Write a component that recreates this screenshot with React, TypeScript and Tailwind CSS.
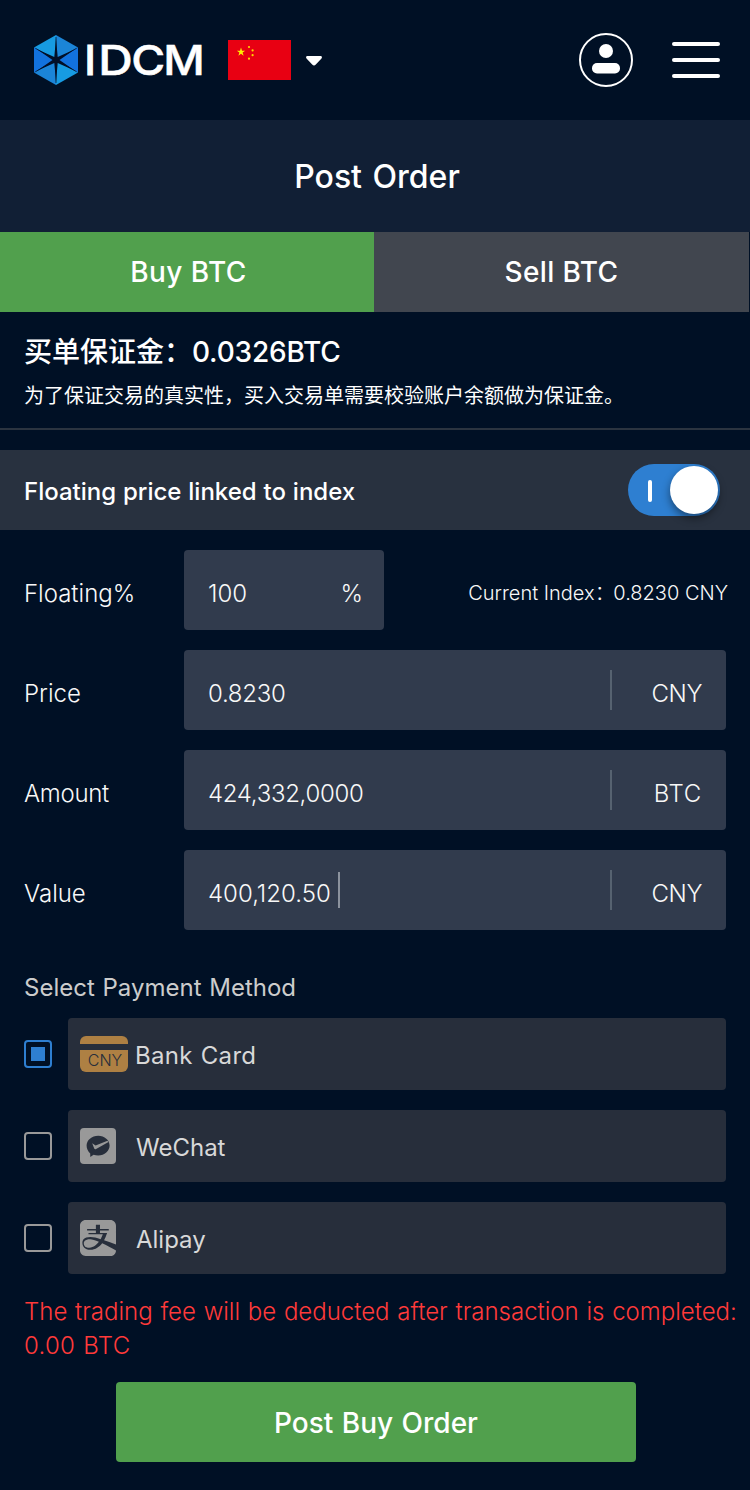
import { useState, type ReactNode } from 'react';
import { FaAlipay } from 'react-icons/fa';

function Logo() {
  return (
    <svg width="170" height="50" viewBox="34 35 170 50" className="shrink-0">
      <polygon points="56,60 34,47.5 56,35" fill="#179be2" />
      <polygon points="56,60 56,35 78,47.5" fill="#1b85d8" />
      <polygon points="56,60 78,47.5 78,72.5" fill="#1272de" />
      <polygon points="56,60 78,72.5 56,85" fill="#179be2" />
      <polygon points="56,60 56,85 34,72.5" fill="#1b85d8" />
      <polygon points="56,60 34,72.5 34,47.5" fill="#1272de" />
      <path d="M56 37v46M35.500 48.300l41 23.400M76.500 48.300l-41 23.400" stroke="#020f27" strokeWidth="0.7" />
      <polygon
        fill="#020f27"
        points="56,38 57.700,57 75,49.200 59.500,60 75,70.800 57.700,63 56,82 54.300,63 37,70.800 52.500,60 37,49.200 54.300,57"
      />
      <g fill="#fff" stroke="#fff" strokeWidth="0.5" fontSize="41" fontWeight="500" fontFamily="Inter, sans-serif">
        <text x="84.600" y="75" strokeWidth="1">I</text>
        <text x="98.300" y="75" textLength="34.500" lengthAdjust="spacingAndGlyphs">D</text>
        <text x="131.200" y="75" textLength="34" lengthAdjust="spacingAndGlyphs">C</text>
        <text x="163.200" y="75" textLength="41.500" lengthAdjust="spacingAndGlyphs">M</text>
      </g>
    </svg>
  );
}

function Flag() {
  return (
    <svg width="63" height="40" viewBox="0 0 63 40" className="ml-6 shrink-0">
      <rect width="63" height="40" fill="#e80012" />
      <polygon fill="#fff000" points="13,7.6 14,10.7 17.2,10.7 14.6,12.6 15.6,15.7 13,13.8 10.4,15.7 11.4,12.6 8.8,10.7 12,10.7" />
      <g fill="#ffd800">
        <circle cx="21" cy="7" r="1.1" />
        <circle cx="24.6" cy="10.4" r="1.1" />
        <circle cx="24.6" cy="15.2" r="1.1" />
        <circle cx="21" cy="18.7" r="1.1" />
      </g>
    </svg>
  );
}

function Header() {
  return (
    <header className="flex h-[120px] items-center pr-[30px] pl-[34px]">
      <Logo />
      <Flag />
      <svg width="16" height="10" viewBox="0 0 16 10" className="mt-0.5 ml-[15px]">
        <path d="M1.5 0h13c1.4 0 1.9 1.4 1 2.4L9.8 8.6c-1.1 1.2-2.5 1.2-3.6 0L.5 2.4C-.4 1.4.1 0 1.5 0z" fill="#fff" />
      </svg>
      <svg width="54" height="54" viewBox="0 0 54 54" className="ml-auto">
        <circle cx="27" cy="27" r="26" fill="none" stroke="#fff" strokeWidth="2" />
        <circle cx="27" cy="18" r="7" fill="#fff" />
        <rect x="13" y="30" width="28" height="10.5" rx="5" fill="#fff" />
      </svg>
      <div className="ml-[39px] flex flex-col gap-3">
        <span className="h-1 w-12 rounded-full bg-white" />
        <span className="h-1 w-12 rounded-full bg-white" />
        <span className="h-1 w-12 rounded-full bg-white" />
      </div>
    </header>
  );
}

function Row({ label, children }: { label: string; children: ReactNode }) {
  return (
    <div className="flex h-20 items-center">
      <span className={`w-40 pt-2 ${label === 'Amount' ? '-tracking-[0.3px]' : ''}`}>{label}</span>
      {children}
    </div>
  );
}

function Field({ value, unit, caret }: { value: string; unit: string; caret?: boolean }) {
  return (
    <div className="flex h-20 w-[542px] items-center rounded bg-[#313b4d] pr-6 pl-6">
      <span className={`pt-2 ${caret ? '' : '-tracking-[0.3px]'}`}>{value}</span>
      {caret && <span className="ml-[7px] h-9 w-0.5 bg-[#8b929d]" />}
      <span className="ml-auto h-10 w-0.5 bg-[#566270]" />
      <span className={`w-[90px] pt-2 text-right ${unit === 'BTC' ? 'tracking-[0.7px]' : '-tracking-[0.4px]'}`}>{unit}</span>
    </div>
  );
}

function BankIcon() {
  return (
    <span className="flex h-9 w-12 flex-col gap-1.5 overflow-hidden rounded-md">
      <span className="h-2 bg-[#ae8043]" />
      <span className="flex h-[22px] items-center justify-center bg-[#ae8043] pb-0.5 pl-0.5 text-base leading-none font-light text-[#272e3b]">CNY</span>
    </span>
  );
}

function WeChatIcon() {
  return (
    <svg width="36" height="36" viewBox="0 0 36 36">
      <rect width="36" height="36" rx="4" fill="#999" />
      <path
        d="M18.2 7.700c6.400 0 11.400 4.400 11.400 9.900s-5 9.900-11.400 9.900c-1.700 0-3.200-.3-4.600-.8L10.300 29l-.1-3.600c-2.300-1.800-3.600-4.900-3.600-7.800 0-5.500 5.200-9.900 11.600-9.900z"
        fill="#272e3b"
      />
      <path d="M12.200 15.300l3.400 2.200 11.900-4.800 1 1.400-12.400 6.900c-.9.4-1.500.2-1.900-.6z" fill="#999" />
    </svg>
  );
}

function AlipayIcon() {
  return <FaAlipay className="size-9 text-[#999]" viewBox="0 32 448 448" />;
}

function Method({ name, icon, checked, onSelect }: { name: string; icon: ReactNode; checked: boolean; onSelect: () => void }) {
  return (
    <div className="flex items-center gap-4" onClick={onSelect}>
      <span className={`flex size-7 items-center justify-center rounded border-2 ${checked ? 'border-[#2e7fd1]' : 'border-[#999]'}`}>
        {checked && <span className="size-3.5 bg-[#2e7fd1]" />}
      </span>
      <div className="flex h-[72px] w-[658px] items-center rounded bg-[#272e3b] pl-3">
        <span className={name === 'Bank Card' ? 'w-[55px]' : 'w-14'}>{icon}</span>
        <span className={`pt-1 font-normal text-[#d8d8d8] ${name === 'Bank Card' ? 'tracking-[0.3px] [word-spacing:1px]' : ''}`}>{name}</span>
      </div>
    </div>
  );
}

export default function App() {
  const [method, setMethod] = useState('Bank Card');
  const methods = [
    { name: 'Bank Card', icon: <BankIcon /> },
    { name: 'WeChat', icon: <WeChatIcon /> },
    { name: 'Alipay', icon: <AlipayIcon /> },
  ];
  return (
    <div className="h-[1490px] w-[750px] overflow-hidden bg-[#001025] text-2xl leading-none font-light whitespace-nowrap text-[#f8f8f8] [font-family:Inter,'Noto_Sans_CJK_SC',sans-serif]">
      <Header />
      <h1 className="flex h-28 items-center justify-center bg-[#111f35] pt-0.5 pl-1 text-[32px] leading-none font-medium text-white [word-spacing:2px]">
        Post Order
      </h1>
      <div className="flex h-20 pr-px text-[28px] leading-none font-medium text-white [word-spacing:2px]">
        <button className="w-[374px] bg-[#51a04d] pl-[3px] tracking-[0.4px]">Buy BTC</button>
        <button className="w-[375px] bg-[#41464f] tracking-[0.4px]">Sell BTC</button>
      </div>
      <section className="h-[118px] border-b-2 border-[#2b3440] px-6 pt-6 text-white">
        <div className="flex h-8 items-center text-[28px] leading-8 font-medium">
          <span className="w-[168px] overflow-hidden">买单保证金：</span>
          <span className="-tracking-[0.2px]">0.0326BTC</span>
        </div>
        <p className="mt-3 text-[20px] leading-8 font-normal">为了保证交易的真实性，买入交易单需要校验账户余额做为保证金。</p>
      </section>
      <section className="mt-5 flex h-20 items-center justify-between bg-[#28313f] pr-[30px] pl-6 text-white">
        <span className="pt-1 font-medium [word-spacing:0.5px]">Floating price linked to index</span>
        <span className="flex h-[52px] w-[92px] items-center justify-between rounded-full bg-[#2e7fd1] pr-0.5 pl-5">
          <span className="mt-0.5 h-[22px] w-1 rounded-sm bg-white" />
          <span className="size-12 rounded-full bg-white shadow-[0_4px_8px_rgba(0,0,0,0.45)]" />
        </span>
      </section>
      <section className="mt-5 flex flex-col gap-5 pl-6">
        <Row label="Floating%">
          <div className="flex h-20 w-[200px] items-center justify-between rounded bg-[#313b4d] pt-2 pr-[21px] pl-6">
            <span>100</span>
            <span>%</span>
          </div>
          <div className="ml-auto flex items-center pt-1.5 pr-[22px] text-[20px] leading-8">
            <span className="w-[145px] overflow-hidden">Current Index：</span>
            <span>0.8230 CNY</span>
          </div>
        </Row>
        <Row label="Price"><Field value="0.8230" unit="CNY" /></Row>
        <Row label="Amount"><Field value="424,332,0000" unit="BTC" /></Row>
        <Row label="Value"><Field value="400,120.50" unit="CNY" caret /></Row>
      </section>
      <h2 className="mt-[46px] pl-6 text-2xl leading-6 font-normal text-[#ccc] [word-spacing:1px]">Select Payment Method</h2>
      <section className="mt-[18px] flex flex-col gap-5 pl-6">
        {methods.map((m) => (
          <Method key={m.name} {...m} checked={method === m.name} onSelect={() => setMethod(m.name)} />
        ))}
      </section>
      <p className="mt-[21px] pl-6 leading-[34px] text-[#ff3a3a] [word-spacing:1px]">
        The trading fee will be deducted after transaction is completed:
        <br />
        <span className="tracking-[0.3px]">0.00 BTC</span>
      </p>
      <button className="mt-[19px] ml-[116px] h-20 w-[520px] rounded bg-[#51a04d] pt-px text-[28px] leading-none font-medium text-white [word-spacing:1px]">
        Post Buy Order
      </button>
    </div>
  );
}
